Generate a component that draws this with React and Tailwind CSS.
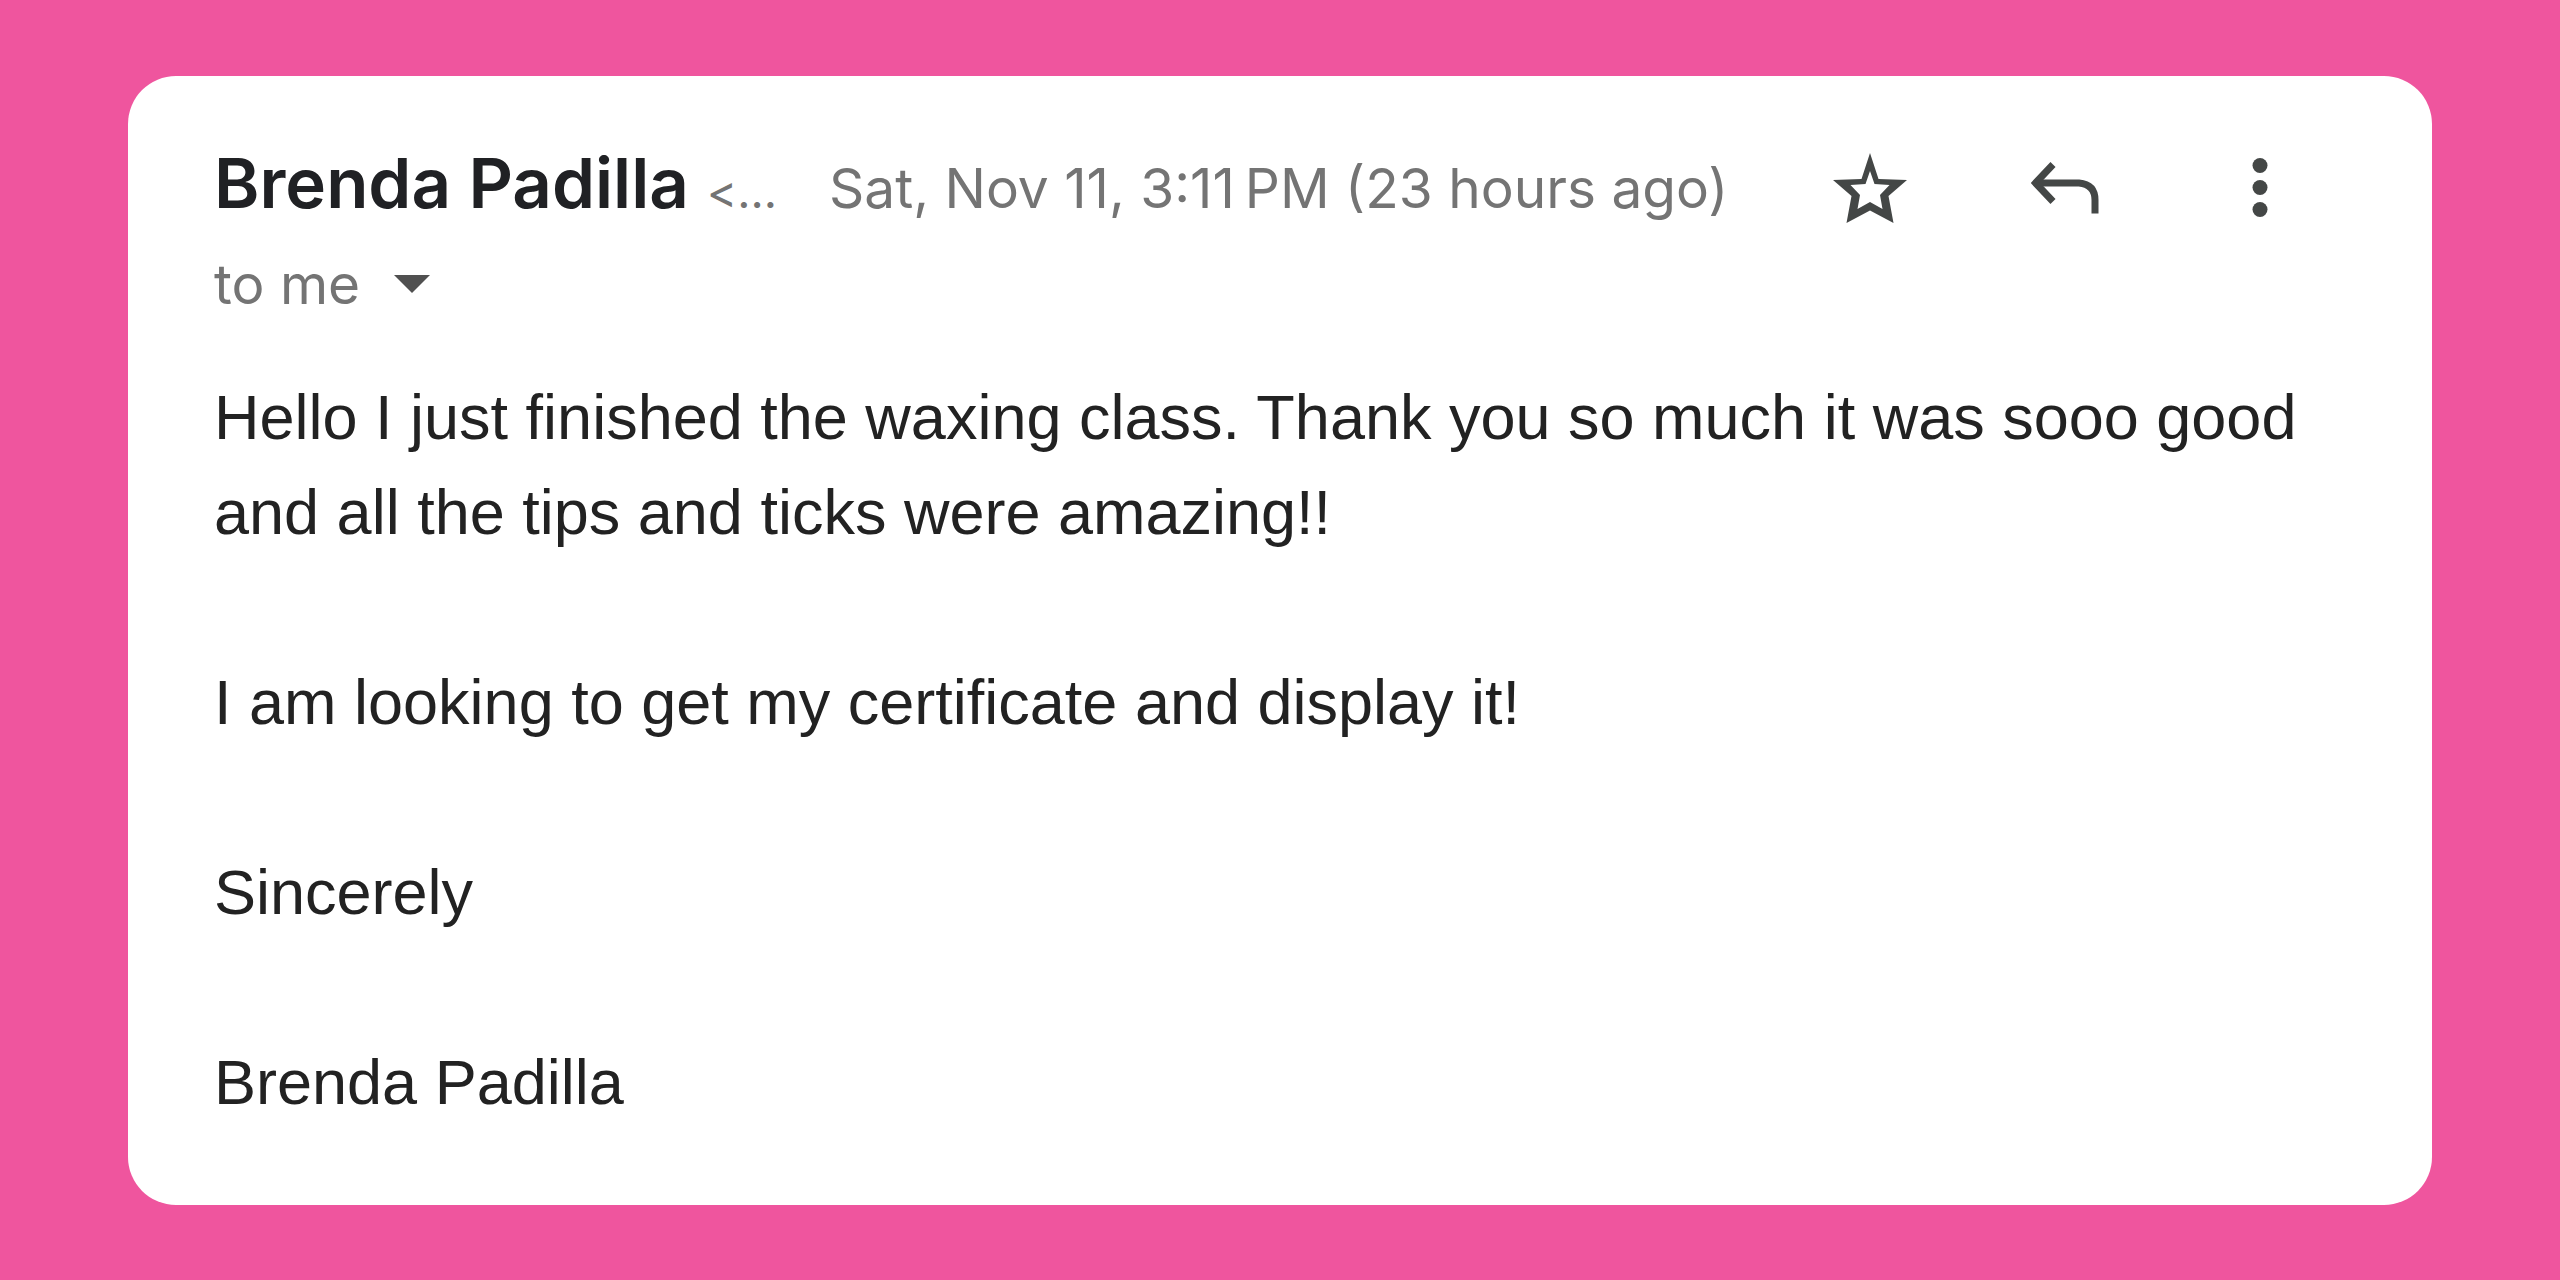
function StarIcon() {
  return (
    <svg viewBox="12 12 76 74" className="h-[74px] w-[76px]" fill="currentColor" fillRule="evenodd" aria-hidden="true">
      <path d="M50 14 58.500 40 87 41 68.500 57 73.500 84 50 71.500 26.500 84 31.500 57 13 41 41.500 40ZM50 32 45.500 45 30.500 46 40 56 37.500 70 50 63 62.500 70 60 56 69.500 46 54.500 45Z" />
    </svg>
  );
}

function ReplyIcon() {
  return (
    <svg viewBox="12 21 68 54" className="h-[54px] w-[68px]" fill="none" stroke="currentColor" strokeWidth="7" aria-hidden="true">
      <path d="M34 24.500 16.500 43 34 61.500" />
      <path d="M16 43H60Q76 44.500 76 60V73.500" />
    </svg>
  );
}

function MoreIcon() {
  return (
    <svg viewBox="0 0 16 60" className="h-[60px] w-4" fill="currentColor" aria-hidden="true">
      <circle cx="8" cy="7.500" r="7.500" />
      <circle cx="8" cy="29.500" r="7.500" />
      <circle cx="8" cy="51.500" r="7.500" />
    </svg>
  );
}

function IconButton({ label, children }) {
  return (
    <button type="button" aria-label={label} className="flex size-24 items-center justify-center rounded-full text-[#444746]">
      {children}
    </button>
  );
}

export default function App() {
  return (
    <main className="min-h-screen bg-[#ef559e] px-32 pt-[76px] pb-[74px]">
      <article className="rounded-[48px] bg-white px-[86px] pt-16 pb-[75px] font-['Liberation_Sans',Arial,sans-serif]">
        <header className="font-[Inter,sans-serif] text-[#747474]">
          <div className="flex items-start justify-between">
            <div className="flex items-baseline whitespace-nowrap leading-[86px]">
              <h1 className="text-[69px] font-semibold text-[#202124]">Brenda Padilla</h1>
              <span className="ml-[18px] text-[46px]">&lt;...</span>
              <time className="ml-[52px] text-[55px]">{"Sat, Nov 11, 3:11\u202fPM (23 hours ago)"}</time>
            </div>
            <div className="mr-[38px] flex items-center gap-[99px]">
              <IconButton label="Star"><StarIcon /></IconButton>
              <IconButton label="Reply"><ReplyIcon /></IconButton>
              <IconButton label="More"><MoreIcon /></IconButton>
            </div>
          </div>
          <button type="button" className="flex items-center gap-[34px] text-[55px] leading-[96px]">
            to me
            <svg viewBox="0 0 36 18" className="h-[18px] w-9" fill="#505050" aria-hidden="true">
              <path d="M0 0H36L18 18Z" />
            </svg>
          </button>
        </header>
        <div className="mt-[38px] text-[63px] leading-[95px] text-[#222222]">
          <p>
            Hello I just finished the waxing class. Thank you so much it was sooo good and all the tips and ticks were amazing!!
          </p>
          <p className="mt-[95px]">I am looking to get my certificate and display it!</p>
          <p className="mt-[95px]">Sincerely</p>
          <p className="mt-[95px]">Brenda Padilla</p>
        </div>
      </article>
    </main>
  );
}
